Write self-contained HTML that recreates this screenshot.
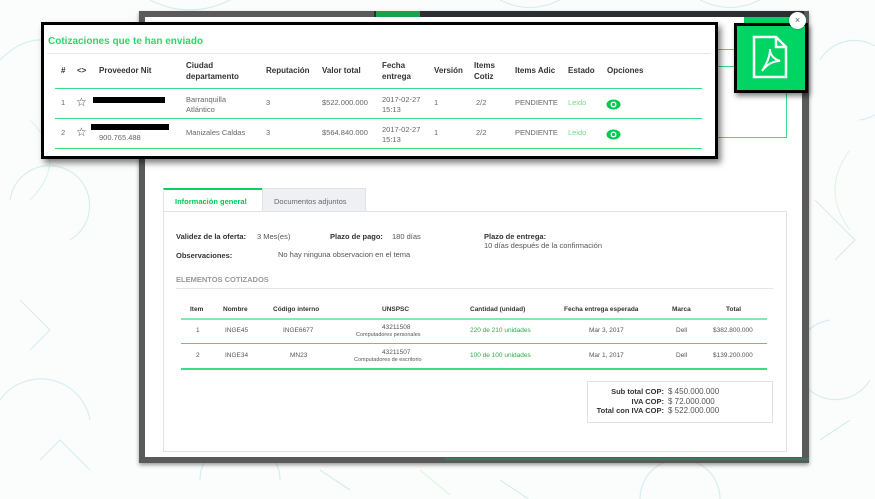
<!DOCTYPE html>
<html><head><meta charset="utf-8"><style>
*{box-sizing:border-box;margin:0;padding:0}
body{width:875px;height:499px;overflow:hidden;background:#fbfdfc;font-family:"Liberation Sans",sans-serif;position:relative;color:#555}
.abs{position:absolute}
.bg{position:absolute;left:0;top:0}
.frame{left:139px;top:11px;width:670px;height:452px;background:#5a5a5a;box-shadow:0 2px 4px rgba(0,0,0,.4)}
.modal{left:145px;top:17px;width:657px;height:440px;background:#fff}
.b{font-weight:bold;color:#333}
.t{font-size:7.5px}
.popup{left:41px;top:22px;width:677px;height:137px;background:#fff;border:3px solid #000;box-shadow:3px 4px 6px rgba(0,0,0,.5)}
.pdf{left:734px;top:23px;width:74px;height:70px;background:#00d563;border:3px solid #000;box-shadow:2px 3px 5px rgba(0,0,0,.5)}
.gl{background:#3ddc84}
</style></head><body>
<svg class="bg" width="875" height="499" fill="none" stroke-width="1.2">
<g stroke="#cfe9ec" opacity=".8">
<path d="M0 60 q40-40 80 0 t80 0"/><path d="M10 200 a40 40 0 1 1 60 40"/><path d="M20 300 l30 30 l-20 20"/><path d="M0 400 a50 50 0 0 1 90 20"/><path d="M40 460 l20-20 l30 30"/>
<path d="M820 60 a40 40 0 1 1 40 60"/><path d="M815 200 l40 40 l-20 20"/><path d="M830 320 a40 40 0 1 0 40 60"/><path d="M820 440 l30-20"/>
<path d="M200 480 a40 40 0 0 1 80 0"/><path d="M320 470 l30 20"/><path d="M640 499 a40 40 0 0 1 80 0"/><path d="M500 480 l30 20"/>
<path d="M150 0 q40 20 80 0"/><path d="M500 0 q30 15 60 0"/><path d="M700 0 q30 15 60 0"/>
</g>
<g stroke="#dff5e4"><path d="M30 120 q40 40 0 80"/><path d="M850 150 q-30 40 0 80"/><path d="M420 470 l30 25"/></g>
</svg>
<div class="abs frame"></div>
<div class="abs" style="left:374px;top:11px;width:430px;height:6px;background:#2b2e33"></div>
<div class="abs" style="left:376px;top:11px;width:44px;height:6px;background:#16a34a"></div>
<div class="abs modal"></div>
<div class="abs" style="left:744px;top:17px;width:62px;height:33px;background:#00d563"></div>
<div class="abs" style="left:713px;top:49px;width:74px;height:89px;border:1px solid #3ddc84;border-left:none"></div>
<div class="abs" style="left:713px;top:66px;width:30px;height:1px;background:#3ddc84"></div>
<div class="abs" style="left:445px;top:458px;width:364px;height:2px;background:#3c7a5a"></div>

<div class="abs" style="left:163px;top:188px;width:99px;height:24px;border-top:2px solid #00d563;background:#fff;border-left:1px solid #e2e4e7"></div>
<div class="abs b" style="left:175px;top:197px;font-size:7.5px;color:#00c853">Información general</div>
<div class="abs" style="left:262px;top:188px;width:104px;height:24px;background:#eef0f3;border:1px solid #dfe2e6"></div>
<div class="abs" style="left:274px;top:197px;font-size:7.5px;color:#666">Documentos adjuntos</div>
<div class="abs" style="left:163px;top:211px;width:624px;height:241px;border:1px solid #e0e3e7"></div>

<div class="abs b t" style="left:176px;top:232px">Validez de la oferta:</div>
<div class="abs t" style="left:257px;top:232px">3 Mes(es)</div>
<div class="abs b t" style="left:330px;top:232px">Plazo de pago:</div>
<div class="abs t" style="left:392px;top:232px">180 días</div>
<div class="abs b t" style="left:484px;top:232px">Plazo de entrega:</div>
<div class="abs t" style="left:484px;top:241px">10 días después de la confirmación</div>
<div class="abs b t" style="left:176px;top:251px">Observaciones:</div>
<div class="abs t" style="left:278px;top:250px">No hay ninguna observacion en el tema</div>
<div class="abs b t" style="left:176px;top:275px;color:#999">ELEMENTOS COTIZADOS</div>
<div class="abs" style="left:176px;top:288px;width:597px;height:1px;background:#e3e5e8"></div>

<div class="abs" style="left:181px;top:318px;width:586px;height:2px;background:#86e6b0"></div>
<div class="abs gl" style="left:181px;top:343px;width:586px;height:1px"></div>
<div class="abs gl" style="left:181px;top:368px;width:586px;height:1.5px"></div>
<div class="abs b" style="left:0;top:306px;font-size:6.5px;width:875px">
<span class="abs" style="left:190px">Item</span><span class="abs" style="left:223px">Nombre</span><span class="abs" style="left:273px">Código interno</span><span class="abs" style="left:382px">UNSPSC</span><span class="abs" style="left:470px">Cantidad (unidad)</span><span class="abs" style="left:564px">Fecha entrega esperada</span><span class="abs" style="left:672px">Marca</span><span class="abs" style="left:726px">Total</span></div>
<div class="abs" style="left:0;top:327px;font-size:6.5px;width:875px;color:#555">
<span class="abs" style="left:196px">1</span><span class="abs" style="left:225px">INGE45</span><span class="abs" style="left:283px">INGE6677</span><span class="abs" style="left:382px;top:-3px">43211508</span><span class="abs" style="left:356px;top:5px;font-size:5.5px">Computadores personales</span><span class="abs" style="left:470px;color:#2ea84a">220 de 210 unidades</span><span class="abs" style="left:589px">Mar 3, 2017</span><span class="abs" style="left:676px">Dell</span><span class="abs" style="left:713px">$382.800.000</span></div>
<div class="abs" style="left:0;top:352px;font-size:6.5px;width:875px;color:#555">
<span class="abs" style="left:196px">2</span><span class="abs" style="left:225px">INGE34</span><span class="abs" style="left:290px">MN23</span><span class="abs" style="left:382px;top:-3px">43211507</span><span class="abs" style="left:354px;top:5px;font-size:5.5px">Computadores de escritorio</span><span class="abs" style="left:470px;color:#2ea84a">100 de 100 unidades</span><span class="abs" style="left:589px">Mar 1, 2017</span><span class="abs" style="left:676px">Dell</span><span class="abs" style="left:713px">$139.200.000</span></div>

<div class="abs" style="left:587px;top:381px;width:186px;height:42px;border:1px solid #dde0e4"></div>
<div class="abs" style="left:586px;top:387px;width:78px;text-align:right;font-size:7.5px;line-height:9.5px"><b style="color:#333">Sub total COP:<br>IVA COP:<br>Total con IVA COP:</b></div>
<div class="abs" style="left:668px;top:387px;font-size:8px;line-height:9.5px;color:#555">$ 450.000.000<br>$ 72.000.000<br>$ 522.000.000</div>

<div class="abs popup"></div>
<div class="abs b" style="left:48px;top:36px;font-size:10px;color:#2fd46a">Cotizaciones que te han enviado</div>
<div class="abs" style="left:47px;top:53px;width:664px;height:1px;background:#e5e5e5"></div>
<div class="abs b" style="left:0;top:0;font-size:8px;width:875px">
<span class="abs" style="left:61px;top:66px">#</span><span class="abs" style="left:77px;top:66px">&lt;&gt;</span><span class="abs" style="left:99px;top:66px">Proveedor Nit</span><span class="abs" style="left:186px;top:60px;line-height:11px">Ciudad<br>departamento</span><span class="abs" style="left:266px;top:66px">Reputación</span><span class="abs" style="left:322px;top:66px">Valor total</span><span class="abs" style="left:382px;top:60px;line-height:11px">Fecha<br>entrega</span><span class="abs" style="left:434px;top:66px">Versión</span><span class="abs" style="left:474px;top:60px;line-height:11px">Items<br>Cotiz</span><span class="abs" style="left:515px;top:66px">Items Adic</span><span class="abs" style="left:568px;top:66px">Estado</span><span class="abs" style="left:607px;top:66px">Opciones</span></div>
<div class="abs gl" style="left:55px;top:88px;width:647px;height:1px"></div>
<div class="abs gl" style="left:55px;top:118px;width:647px;height:1px"></div>
<div class="abs gl" style="left:55px;top:148px;width:647px;height:1px"></div>
<div class="abs" style="left:0;top:0;font-size:7.5px;width:875px;color:#666">
<span class="abs" style="left:61px;top:98px">1</span><span class="abs" style="left:76px;top:95px;font-size:12px;color:#444">☆</span>
<span class="abs" style="left:93px;top:97px;width:72px;height:6px;background:#000"></span>
<span class="abs" style="left:186px;top:95px;line-height:10px">Barranquilla<br>Atlántico</span><span class="abs" style="left:266px;top:98px">3</span><span class="abs" style="left:322px;top:98px">$522.000.000</span><span class="abs" style="left:382px;top:95px;line-height:10px">2017-02-27<br>15:13</span><span class="abs" style="left:434px;top:98px">1</span><span class="abs" style="left:476px;top:98px">2/2</span><span class="abs" style="left:515px;top:98px">PENDIENTE</span><span class="abs" style="left:568px;top:98px;color:#7bd88e">Leido</span>
<span class="abs" style="left:61px;top:128px">2</span><span class="abs" style="left:76px;top:125px;font-size:12px;color:#444">☆</span>
<span class="abs" style="left:91px;top:124px;width:78px;height:6px;background:#000"></span>
<span class="abs" style="left:99px;top:133px">900.765.488</span>
<span class="abs" style="left:186px;top:128px">Manizales Caldas</span><span class="abs" style="left:266px;top:128px">3</span><span class="abs" style="left:322px;top:128px">$564.840.000</span><span class="abs" style="left:382px;top:125px;line-height:10px">2017-02-27<br>15:13</span><span class="abs" style="left:434px;top:128px">1</span><span class="abs" style="left:476px;top:128px">2/2</span><span class="abs" style="left:515px;top:128px">PENDIENTE</span><span class="abs" style="left:568px;top:128px;color:#7bd88e">Leido</span></div>
<svg class="abs" style="left:606px;top:99px" width="15" height="11" viewBox="0 0 15 11"><ellipse cx="7.5" cy="5.5" rx="7" ry="5" fill="#00c853"/><circle cx="7.5" cy="5.5" r="3" fill="#fff"/><circle cx="7.5" cy="5.5" r="1.6" fill="#00c853"/></svg>
<svg class="abs" style="left:606px;top:129px" width="15" height="11" viewBox="0 0 15 11"><ellipse cx="7.5" cy="5.5" rx="7" ry="5" fill="#00c853"/><circle cx="7.5" cy="5.5" r="3" fill="#fff"/><circle cx="7.5" cy="5.5" r="1.6" fill="#00c853"/></svg>

<div class="abs pdf"></div>
<svg class="abs" style="left:752px;top:35px" width="36" height="44" viewBox="0 0 36 44" fill="none" stroke="#fff" stroke-width="2.5"><path d="M2 2h22l10 10v30H2z"/><path d="M24 2v10h10"/><path d="M10 36c4-6 8-14 8-22c0 6 4 10 10 12c-6 0-12 2-18 10" stroke-width="2"/></svg>
<div class="abs" style="left:789px;top:12px;width:17px;height:17px;border-radius:50%;background:#fff;box-shadow:0 0 3px rgba(0,0,0,.3);font-size:9px;text-align:center;line-height:16px;color:#555">×</div>
</body></html>
